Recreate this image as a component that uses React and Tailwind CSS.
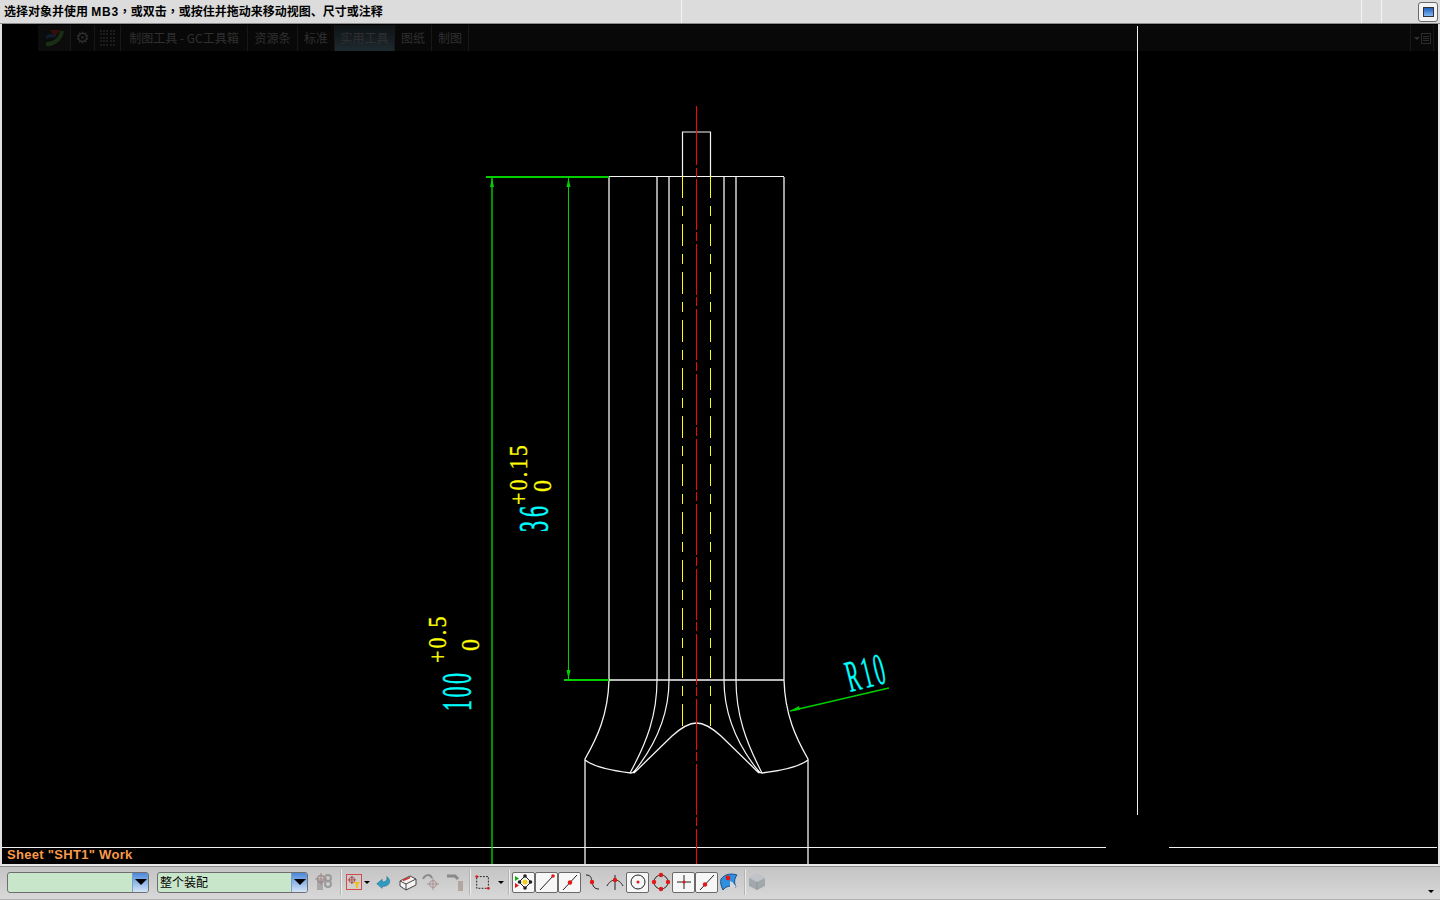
import React from "react";

const CJK = "font-['Noto_Sans_CJK_SC','Noto_Sans',sans-serif]";

/* the drawing itself, in page coordinates */
function Drawing() {
  const white = "#f4f4f4";
  const green = "#00d000";
  return (
    <svg className="absolute top-0 left-0 w-[1436px] h-[840px]" viewBox="2 24 1436 840" fill="none">
      {/* sheet lines */}
      <path d="M1137.5 26V815" stroke="#f0f0f0" />
      <path d="M2 847.5H1106M1169 847.5H1437" stroke="#f0f0f0" />

      {/* pin + body */}
      <path d="M682.5 177V132H710.5V177" stroke={white} strokeWidth="1.2" />
      <path d="M609 177V680M657 177V680M669 177V680M724 177V680M736 177V680M784 177V680" stroke={white} strokeWidth="1.3" />
      <path d="M609 176.5H784" stroke={white} />
      <path d="M609 680H784" stroke={white} strokeWidth="1.3" />

      {/* lower profile */}
      <path d="M609 680C608 715 597 738 585 759V865M784 680C785 715 796 738 808 759V865" stroke={white} strokeWidth="1.3" />
      <path d="M585 760C595 768 615 771 631 773C633 773 634 772 636 770M808 760C798 768 778 771 762 773C760 773 759 772 757 770" stroke={white} strokeWidth="1.3" />
      <path d="M657 680C657 715 647 742 630 773M669 680C669 715 656 745 633 773M736 680C736 715 746 742 762 773M724 680C724 715 737 745 760 773" stroke={white} strokeWidth="1.2" />
      <path d="M634 773L672 736C682 727 690 723 696.5 723C703 723 711 727 721 736L759 773" stroke={white} strokeWidth="1.3" />

      {/* hidden lines + centre line */}
      <path d="M682.5 176V726M710.5 176V726" stroke="#ffff00" strokeDasharray="22 8 10 8" />
      <path d="M696.5 106V165M696.5 168V177" stroke="#ff0000" />
      <path d="M696.5 179V865" stroke="#ff0000" strokeDasharray="51 2 9 3" />

      {/* dimensions */}
      <path d="M486 177H609" stroke={green} strokeWidth="2" />
      <path d="M492 177V865" stroke={green} strokeWidth="1.4" />
      <path d="M568.5 177V680" stroke={green} />
      <path d="M564 680H609" stroke={green} strokeWidth="2" />
      <path d="M492 178L490 187H494ZM568.5 178L566.5 187H570.5ZM568.5 679L566.5 670H570.5Z" fill={green} />
      <path d="M889 688L790 711" stroke={green} strokeWidth="1.3" />
      <path d="M790 711L799 706L800 710Z" fill={green} />

      <g fontFamily="'Liberation Serif',serif" strokeWidth="0.25">
        <text transform="translate(471 711) rotate(-90) scale(1.1 2.1)" fontSize="20" fill="#00ffff" stroke="#00ffff" letterSpacing="2.3">100</text>
        <text transform="translate(446 663) rotate(-90) scale(1.1 1.3)" fontSize="20" fill="#ffff00" stroke="#ffff00" letterSpacing="2">+0.5</text>
        <text transform="translate(479 651) rotate(-90) scale(1.2 1.3)" fontSize="20" fill="#ffff00" stroke="#ffff00">0</text>
        <text transform="translate(548 532) rotate(-90) scale(1.1 2.1)" fontSize="20" fill="#00ffff" stroke="#00ffff" letterSpacing="3.6">36</text>
        <text transform="translate(527 505) rotate(-90) scale(1.1 1.3)" fontSize="20" fill="#ffff00" stroke="#ffff00" letterSpacing="2">+0.15</text>
        <text transform="translate(551 492) rotate(-90) scale(1.2 1.3)" fontSize="20" fill="#ffff00" stroke="#ffff00">0</text>
        <text transform="translate(850 692) rotate(-14) scale(0.72 1.6)" fontSize="28" fill="#00ffff" stroke="#00ffff" letterSpacing="3.5">R10</text>
      </g>
    </svg>
  );
}

/* ribbon sits almost invisible on top of the canvas */
function Ribbon() {
  const tabs = [
    ["制图工具 - GC工具箱", "w-[127px]"],
    ["资源条", "w-[50px]"],
    ["标准", "w-[37px]"],
    ["实用工具", "w-[60px] bg-gradient-to-b from-[#0e1214] to-[#1e2a30]"],
    ["图纸", "w-[37px]"],
    ["制图", "w-[37px]"],
  ];
  return (
    <div className="absolute top-[1px] left-[1px] right-0 h-[26px] flex items-stretch bg-[#080808]">
      <div className="w-[35px] bg-black" />
      <div className="w-[33px] flex items-center justify-center border-r border-[#181818] bg-[#0c0c0c]">
        <svg width="22" height="18" viewBox="0 0 22 18" fill="none">
          <path d="M3 15C10 16 18 10 19 2" stroke="#1a2e14" strokeWidth="4" />
          <path d="M7 1L17 1L12 8Z" fill="#34100c" />
          <path d="M3 9C6 6 9 6 12 8" stroke="#0e1e2c" strokeWidth="3" />
        </svg>
      </div>
      <div className="w-[24px] flex items-center justify-center border-r border-[#181818] text-[#2e2e2e] text-[16px] font-['DejaVu_Sans',sans-serif]">⚙</div>
      <div className="w-[26px] border-r border-[#181818] grid grid-cols-5 gap-[1px] p-[5px] pt-[5px]">
        {Array.from({ length: 25 }).map((_, i) => (
          <span key={i} className="w-[2px] h-[2px] bg-[#1c1c1c]" />
        ))}
      </div>
      {tabs.map(([label, cls]) => (
        <div key={label} className={`${cls} flex items-center justify-center border-r border-[#181818] text-[12px] text-[#303030] ${CJK}`}>
          {label}
        </div>
      ))}
      <div className="flex-1" />
      <div className="w-[24px] mr-[4px] flex items-center justify-center gap-[1px] border-x border-[#181818]">
        <span className="border-x-[3px] border-t-[3px] border-x-transparent border-t-[#333]" />
        <span className="w-[10px] h-[11px] border border-[#2c2c2c] flex flex-col justify-center gap-[1px] px-[1px]">
          <span className="h-[1px] bg-[#2c2c2c]" />
          <span className="h-[1px] bg-[#2c2c2c]" />
          <span className="h-[1px] bg-[#2c2c2c]" />
        </span>
      </div>
    </div>
  );
}

function Combo({ text, className }) {
  return (
    <div className={`${className} h-[21px] flex rounded-[3px] border border-[#6e6e6e] bg-[#c8e6c9] overflow-hidden`}>
      <div className={`flex-1 pl-[2px] text-[12px] leading-[18px] text-black ${CJK}`}>{text}</div>
      <div className="w-[16px] flex items-center justify-center border-l border-[#7f9fbf] bg-gradient-to-b from-[#4a88da] to-[#d4e4f6]">
        <span className="border-x-[6px] border-t-[6px] border-x-transparent border-t-black" />
      </div>
    </div>
  );
}

// small boxed toolbar button
function Boxed({ children, className = "" }) {
  return (
    <div className={`w-[23px] h-[21px] rounded-[2px] border border-[#6a6a6a] bg-[#f7f7f7] flex items-center justify-center ${className}`}>
      {children}
    </div>
  );
}

function Icon({ children, w = 20, className = "" }) {
  return (
    <svg className={className} width={w} height="20" viewBox="0 0 20 20" fill="none">
      {children}
    </svg>
  );
}

function Sep({ className = "" }) {
  return <div className={`w-[2px] h-[26px] bg-[#ececec] border-l border-[#b4b4b4] ${className}`} />;
}

const Red = ({ cx, cy, r = 1.8 }) => <circle cx={cx} cy={cy} r={r} fill="#e01818" />;

function Caret({ className = "" }) {
  return <span className={`border-x-[3px] border-t-[3px] border-x-transparent border-t-black ${className}`} />;
}

function Toolbar() {
  return (
    <div className="h-[34px] flex items-center pl-[7px] pb-[2px] bg-gradient-to-b from-[#c4c4c4] to-[#d8d8d8] border-t border-[#8c8c8c] border-b border-b-[#b0b0b0] relative">
      <Combo className="w-[142px]" />
      <Combo className="w-[151px] ml-[8px]" text="整个装配" />
      <Icon className="ml-[6px]">
        <path d="M3 8H9V18H3Z" fill="#a8a8a8" />
        <circle cx="7" cy="7" r="3.5" stroke="#a08a8a" strokeWidth="1.5" />
        <path d="M7 1V13M1 7H13" stroke="#a08a8a" />
        <circle cx="14" cy="6" r="3" stroke="#9a9a9a" strokeWidth="2" />
        <circle cx="14" cy="12" r="3" stroke="#9a9a9a" strokeWidth="2" />
      </Icon>
      <Sep className="ml-[6px]" />
      <div className="w-[16px] h-[16px] ml-[4px] border border-[#d84a4a] relative">
        <Icon w={14} className="absolute left-0 top-0 h-[14px]">
          <circle cx="7" cy="7" r="4" stroke="#a02828" />
          <path d="M7 1V13M1 7H13" stroke="#a02828" />
          <path d="M9 10H19L15.5 14V19H12.5V14Z" fill="#f0c020" />
        </Icon>
      </div>
      <Caret className="ml-[2px]" />
      <Icon w={18} className="ml-[5px]">
        <path d="M2 12L8 7V10C12 10 14 8 13 4C18 7 18 15 8 15V17Z" fill="#2f9cc0" stroke="#1c6a90" strokeWidth="0.6" />
      </Icon>
      <Icon className="ml-[5px]">
        <path d="M2 9L12 4L18 7V13L8 18L2 14Z" fill="#f4f4f4" stroke="#444" />
        <path d="M2 9L8 12L18 7M8 12V18" stroke="#444" />
        <path d="M5 8.5L12 5.5" stroke="#d83030" strokeWidth="1.5" />
      </Icon>
      <Icon className="ml-[3px]">
        <path d="M2 7C4 2 9 2 11 6" stroke="#8a8a8a" strokeWidth="2" />
        <circle cx="12" cy="12" r="3.5" stroke="#a89090" />
        <path d="M12 6V18M6 12H18" stroke="#a89090" />
      </Icon>
      <Icon className="ml-[5px]">
        <path d="M1 4H9L12 7" stroke="#8a8a8a" strokeWidth="3" />
        <path d="M12 9H17V19H12Z" fill="#b0a8a0" />
      </Icon>
      <Sep className="ml-[3px]" />
      <Icon w={18} className="ml-[3px]">
        <path d="M3 4H16V17H3Z" stroke="#111" strokeDasharray="2 1.5" />
        <Red cx={3} cy={4} r={1.5} />
        <Red cx={16} cy={17} r={1.5} />
      </Icon>
      <Caret className="ml-[6px]" />
      <Sep className="ml-[4px]" />
      <Boxed className="ml-[2px]">
        <svg width="20" height="18" viewBox="0 0 20 18" fill="none">
          <path d="M1 3L5 5.5L1 8Z" fill="#10b010" />
          <path d="M1 10L5 12.5L1 15Z" fill="#e01818" />
          <path d="M11 3L17 9L11 15L5 9Z" stroke="#222" />
          <circle cx="11" cy="3" r="1.8" fill="#222" />
          <circle cx="11" cy="15" r="1.8" fill="#222" />
          <circle cx="5.5" cy="9" r="1.8" fill="#222" />
          <circle cx="16.5" cy="9" r="1.8" fill="#222" />
          <circle cx="11" cy="9" r="2.5" fill="#f0d020" />
        </svg>
      </Boxed>
      <Boxed>
        <Icon>
          <path d="M3 18L17 3" stroke="#222" />
          <Red cx={16} cy={4} />
        </Icon>
      </Boxed>
      <Boxed>
        <Icon>
          <path d="M3 18L17 3" stroke="#222" />
          <Red cx={10} cy={10.5} r={2.2} />
        </Icon>
      </Boxed>
      <Icon w={22}>
        <path d="M4 3C10 3 9 7 10 10C11 14 12 17 17 17" stroke="#222" />
        <Red cx={10} cy={10} r={2.2} />
      </Icon>
      <Icon w={22}>
        <path d="M3 14C5 10 8 8 11 8C14 8 17 10 19 14M11 3V18" stroke="#222" />
        <Red cx={11} cy={8} r={2.2} />
      </Icon>
      <Boxed className="ml-[1px]">
        <svg width="18" height="18" viewBox="0 0 18 18" fill="none">
          <circle cx="9" cy="9" r="7" stroke="#222" />
          <Red cx={9} cy={9} r={1.5} />
        </svg>
      </Boxed>
      <Icon w={22}>
        <circle cx="11" cy="10" r="7" stroke="#222" />
        <Red cx={11} cy={3} r={2.2} />
        <Red cx={11} cy={17} r={2.2} />
        <Red cx={4} cy={10} r={2.2} />
        <Red cx={18} cy={10} r={2.2} />
      </Icon>
      <Boxed className="ml-[1px]">
        <Icon>
          <path d="M10 3V17M3 10H17" stroke="#222" />
          <Red cx={10} cy={10} r={1.5} />
        </Icon>
      </Boxed>
      <Boxed>
        <Icon>
          <path d="M3 18L17 3" stroke="#222" />
          <Red cx={8} cy={12.5} r={2.2} />
        </Icon>
      </Boxed>
      <Icon className="ml-[1px]">
        <path d="M2 7C6 2 12 1 18 3C15 7 15 11 17 15C12 13 7 14 4 18C2 14 1 10 2 7Z" fill="#3090e0" stroke="#185090" />
        <path d="M11 9C14 10 16 13 17 15C15 15 13 15 11 16Z" fill="#d8d8d8" />
        <Red cx={9} cy={6} r={2.4} />
      </Icon>
      <Sep className="ml-[5px]" />
      <Icon className="ml-[1px]">
        <path d="M2 6L10 2L18 6V14L10 18L2 14Z" fill="#a0a8ac" />
        <path d="M2 6L10 10L18 6L10 2Z" fill="#c0c4c8" />
        <path d="M10 10V18" stroke="#8c9498" />
      </Icon>
      <Caret className="absolute right-[6px] bottom-[6px]" />
    </div>
  );
}

export default function App() {
  const comma = "font-['Noto_Sans_CJK_TC',sans-serif]";
  return (
    <div className="w-[1440px] h-[900px] flex flex-col overflow-hidden bg-[#d0d0d0]">
      {/* prompt line */}
      <div className="h-[24px] flex items-center bg-[#dcdcdc] border-b border-[#8c8c8c]">
        <div className="w-[681px] pl-[4px] text-[12px] font-bold text-black font-['Liberation_Sans','Noto_Sans_CJK_SC',sans-serif] whitespace-nowrap">
          选择对象并使用 <span className="tracking-[0.7px]">MB3</span><span className={comma}>，</span>或双击<span className={comma}>，</span>或按住并拖动来移动视图、尺寸或注释
        </div>
        <div className="w-[680px] h-full border-l border-[#f4f4f4]" />
        <div className="w-[20px] h-full border-l border-[#f4f4f4]" />
        <div className="flex-1 h-full border-l border-[#f4f4f4]" />
        <div className="w-[20px] h-[20px] mr-[2px] mt-[1px] rounded-[3px] border border-[#6a6a6a] bg-[#f4f4f4] flex items-center justify-center">
          <span className="w-[11px] h-[10px] bg-gradient-to-b from-[#2060c0] to-[#80b8f0] border border-[#333]" />
        </div>
      </div>
      {/* graphics window */}
      <div className="h-[842px] border-x-2 border-x-[#e0e0e0] border-b-2 border-b-[#e8e8e8] bg-black relative">
        <Ribbon />
        <Drawing />
        <div className="absolute left-[5px] bottom-[1px] text-[13px] leading-[16px] font-bold tracking-[0.3px] text-[#f89a4a] font-['Liberation_Sans',sans-serif]">
          Sheet "SHT1" Work
        </div>
      </div>
      <Toolbar />
    </div>
  );
}
